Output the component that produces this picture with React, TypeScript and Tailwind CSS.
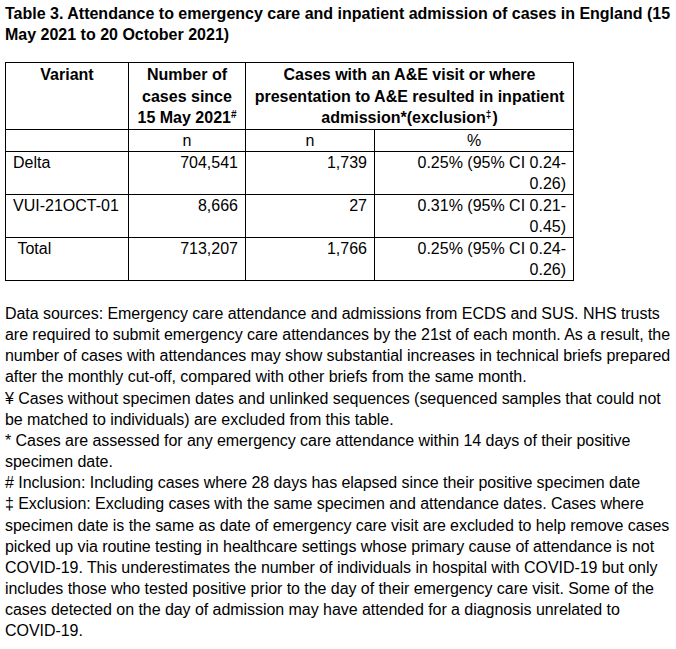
import React from "react";

const cell = "border border-black px-[7px] align-top";

export default function App() {
  return (
    <div
      className="w-[676px] h-[649px] bg-white text-black overflow-hidden pl-[5px] pt-[3px]"
      style={{ fontFamily: '"Liberation Sans", Arial, sans-serif' }}
    >
      <h1 className="text-[16px] leading-[21px] font-bold pr-[3px]">
        Table 3. Attendance to emergency care and inpatient admission of cases in England (15 May 2021 to 20 October 2021)
      </h1>
      <table className="mt-[17px] border-collapse text-[16px] leading-[21.5px] w-[568px] table-fixed">
        <colgroup>
          <col className="w-[123px]" />
          <col className="w-[117px]" />
          <col className="w-[129px]" />
          <col className="w-[199px]" />
        </colgroup>
        <thead>
          <tr className="h-[64px]">
            <th className={`${cell} text-center font-bold pt-[1px]`}>Variant</th>
            <th className={`${cell} text-center font-bold pt-[1px]`}>
              Number of cases since 15 May 2021<sup className="text-[10px] leading-none">#</sup>
            </th>
            <th colSpan={2} className={`${cell} text-center font-bold pt-[1px]`}>
              Cases with an A&amp;E visit or where presentation to A&amp;E resulted in inpatient admission*(exclusion<sup className="text-[10px] leading-none mr-[1px]">‡</sup>)
            </th>
          </tr>
        </thead>
        <tbody>
          <tr className="h-[22px]">
            <td className={cell}></td>
            <td className={`${cell} text-center`}>n</td>
            <td className={`${cell} text-center`}>n</td>
            <td className={`${cell} text-center`}>%</td>
          </tr>
          {[
            ["Delta", "704,541", "1,739", "0.25% (95% CI 0.24-", "0.26)"],
            ["VUI-21OCT-01", "8,666", "27", "0.31% (95% CI 0.21-", "0.45)"],
            ["\u00a0Total", "713,207", "1,766", "0.25% (95% CI 0.24-", "0.26)"],
          ].map((r) => (
            <tr key={r[0]} className="leading-[20.5px]">
              <td className={`${cell} pt-[1px]`}>{r[0]}</td>
              <td className={`${cell} text-right pt-[1px]`}>{r[1]}</td>
              <td className={`${cell} text-right pt-[1px]`}>{r[2]}</td>
              <td className={`${cell} text-right pt-[1px]`}>
                <div>{r[3]}</div>
                <div>{r[4]}</div>
              </td>
            </tr>
          ))}
        </tbody>
      </table>
      <div className="mt-[22px] text-[16px] leading-[21.15px] tracking-[-0.05px]">
        <p>
          Data sources: Emergency care attendance and admissions from ECDS and SUS. NHS trusts are required to submit emergency care attendances by the 21st of each month. As a result, the number of cases with attendances may show substantial increases in technical briefs prepared after the monthly cut-off, compared with other briefs from the same month.
        </p>
        <p>¥ Cases without specimen dates and unlinked sequences (sequenced samples that could not be matched to individuals) are excluded from this table.</p>
        <p>* Cases are assessed for any emergency care attendance within 14 days of their positive specimen date.</p>
        <p># Inclusion: Including cases where 28 days has elapsed since their positive specimen date</p>
        <p>
          ‡ Exclusion: Excluding cases with the same specimen and attendance dates. Cases where specimen date is the same as date of emergency care visit are excluded to help remove cases picked up via routine testing in healthcare settings whose primary cause of attendance is not COVID-19. This underestimates the number of individuals in hospital with COVID-19 but only includes those who tested positive prior to the day of their emergency care visit. Some of the cases detected on the day of admission may have attended for a diagnosis unrelated to COVID-19.
        </p>
      </div>
    </div>
  );
}
